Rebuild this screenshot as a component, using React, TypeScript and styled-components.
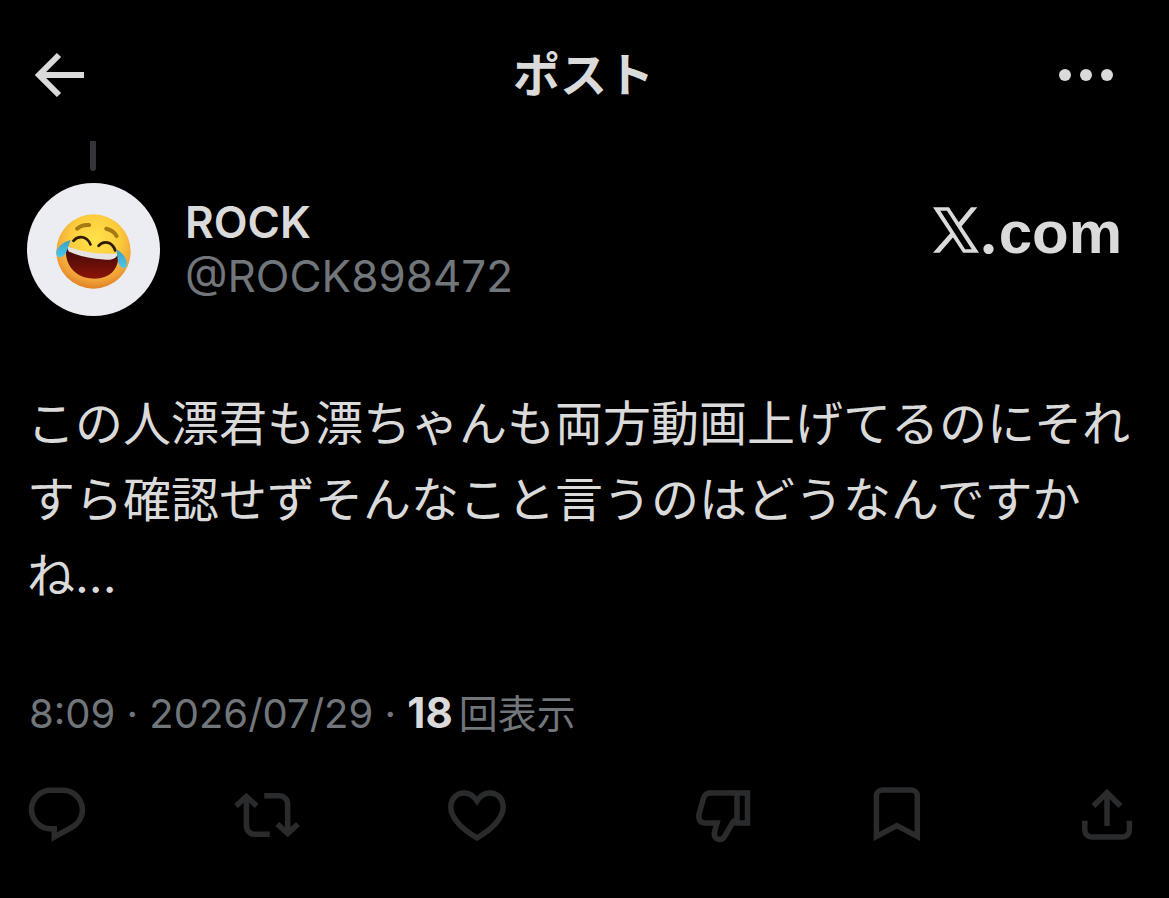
import React from "react";
import styled, { createGlobalStyle } from "styled-components";

const GlobalStyle = createGlobalStyle`
  * { box-sizing: border-box; }
  body {
    margin: 0;
    background: #000;
    color: #dadada;
    font-family: Inter, "Noto Sans CJK JP", sans-serif;
  }
`;

const Page = styled.main`
  padding: 0 29px 48px 27px;
`;

const Header = styled.header`
  display: grid;
  grid-template-columns: 87px 1fr 87px;
  align-items: center;
  height: 140px;
  padding-top: 10px;
`;

const Title = styled.h1`
  margin: 0;
  text-align: center;
  font-size: 47px;
  line-height: 72px;
  font-weight: 700;
`;

const IconButton = styled.button<{ $shift?: number }>`
  display: flex;
  width: 66px;
  padding: 0;
  margin-left: ${(p) => p.$shift ?? 0}px;
  border: 0;
  background: none;
  color: inherit;
  cursor: pointer;

  svg { display: block; flex: none; }
`;

const ThreadLine = styled.div`
  width: 6px;
  height: 30px;
  margin: 1px 0 12px 63px;
  border-radius: 0 0 3px 3px;
  background: #343538;
`;

const Author = styled.section`
  display: flex;
  align-items: flex-start;
  gap: 25px;
`;

const Avatar = styled.div`
  display: flex;
  align-items: center;
  justify-content: center;
  width: 133px;
  height: 133px;
  padding-top: 3px;
  border-radius: 50%;
  background: #ecedf2;
`;

const Names = styled.div`
  flex: 1;
  padding-top: 12px;
  font-size: 44px;
  line-height: 54px;
`;

const Name = styled.div`
  font-weight: 600;
`;

const Handle = styled.div`
  color: #71767b;
`;

const Brand = styled.div`
  display: flex;
  align-items: baseline;
  padding: 12px 18px 0 0;
  font-family: "Liberation Sans", Arial, sans-serif;
  font-size: 60px;
  line-height: 72px;
  font-weight: 700;
`;

const BrandDot = styled.span`
  font-family: Inter, sans-serif;
`;

const Body = styled.p`
  margin: 70px 0 0;
  font-size: 48px;
  line-height: 76px;
`;

const Meta = styled.p`
  margin: 69px 0 0;
  padding-left: 2px;
  color: #71767b;
  font-size: 40px;
  line-height: 60px;
`;

const Count = styled.strong`
  color: #dadada;
  font-size: 42px;
  font-weight: 700;
`;

const Views = styled.span`
  margin-left: 6px;
  font-size: 39px;
`;

const Actions = styled.footer`
  display: grid;
  grid-template-columns: repeat(6, 66px);
  justify-content: space-between;
  margin: 38px 0 0 -3px;
  color: #2a2b2d;
`;

const ActionIcon = ({ children }: { children: React.ReactNode }) => (
  <svg width="66" height="66" viewBox="0 0 66 66" fill="none" stroke="currentColor" strokeWidth="5.5">
    {children}
  </svg>
);

const XMark = () => (
  <svg width="46" height="46" viewBox="0 0 139 138" fill="currentColor" fillRule="evenodd">
    <path d="M0 0H48L139 138H91ZM22 11L97 127H117L42 11Z" />
    <path d="M115 0H134L83 62L74 50ZM0 138H20L64 87L56 74Z" />
  </svg>
);

const JoyFace = () => (
  <svg width="75" height="75" viewBox="0 0 224 224">
    <defs>
      <radialGradient id="skin" cx="0.52" cy="0.34" r="0.68">
        <stop offset="0" stopColor="#ffe34a" />
        <stop offset="0.5" stopColor="#fccb3c" />
        <stop offset="0.82" stopColor="#f0a038" />
        <stop offset="1" stopColor="#dd7a22" />
      </radialGradient>
      <linearGradient id="mouth" x1="0" y1="0" x2="0" y2="1">
        <stop offset="0" stopColor="#3d0808" />
        <stop offset="1" stopColor="#8a1408" />
      </linearGradient>
      <linearGradient id="tear" x1="0" y1="0" x2="0" y2="1">
        <stop offset="0" stopColor="#3b9fc0" />
        <stop offset="1" stopColor="#4cc8ee" />
      </linearGradient>
    </defs>
    <circle cx="112" cy="112" r="111" fill="url(#skin)" />
    <g fill="none" strokeLinecap="round">
      <path d="M63 44Q78 31 99 33" stroke="#a67a12" strokeWidth="12" />
      <path d="M150 44Q172 49 181 66" stroke="#a67a12" strokeWidth="12" />
      <path d="M52 80C66 64 92 64 103 91" stroke="#2e1a05" strokeWidth="8" />
      <path d="M127 95C142 78 168 82 177 109" stroke="#2e1a05" strokeWidth="8" />
    </g>
    <path d="M31 95C70 116 130 126 185 121C190 164 160 196 108 193C54 190 22 146 31 95Z" fill="url(#mouth)" />
    <path d="M31 95C70 112 130 122 185 118C180 136 164 138 142 136C100 132 68 126 38 112Z" fill="#e6e3e0" />
    <path d="M44 78C20 84 -2 104 1 120C5 134 24 130 30 116C35 104 38 92 44 78Z" fill="url(#tear)" />
    <path d="M181 106C202 116 218 144 209 158C200 168 188 154 185 140C183 128 182 116 181 106Z" fill="url(#tear)" />
  </svg>
);

export default function App() {
  return (
    <>
      <GlobalStyle />
      <Page>
        <Header>
          <IconButton aria-label="戻る">
            <svg width="66" height="66" viewBox="0 0 66 66" fill="none" stroke="currentColor" strokeWidth="6">
              <path d="M57 33H13M32 13L12 33L32 53" />
            </svg>
          </IconButton>
          <Title>ポスト</Title>
          <IconButton aria-label="その他">
            <svg width="66" height="66" viewBox="0 0 66 66" fill="currentColor">
              <circle cx="12" cy="33" r="6" />
              <circle cx="33" cy="33" r="6" />
              <circle cx="54" cy="33" r="6" />
            </svg>
          </IconButton>
        </Header>
        <ThreadLine />
        <Author>
          <Avatar>
            <JoyFace />
          </Avatar>
          <Names>
            <Name>ROCK</Name>
            <Handle>@ROCK898472</Handle>
          </Names>
          <Brand>
            <XMark />
            <span>
              <BrandDot>.</BrandDot>com
            </span>
          </Brand>
        </Author>
        <Body>この人漂君も漂ちゃんも両方動画上げてるのにそれすら確認せずそんなこと言うのはどうなんですかね...</Body>
        <Meta>
          8:09 · 2026/07/29 · <Count>18</Count>
          <Views>回表示</Views>
        </Meta>
        <Actions>
          <IconButton aria-label="返信">
            <svg width="66" height="66" viewBox="0 0 24 24" fill="currentColor">
              <path d="M1.751 10c0-4.42 3.584-8 8.005-8h4.366c4.49 0 8.129 3.64 8.129 8.13 0 2.96-1.607 5.68-4.196 7.11l-8.054 4.46v-3.69h-.067c-4.49.1-8.183-3.51-8.183-8.01zm8.005-6c-3.317 0-6.005 2.69-6.005 6 0 3.37 2.77 6.08 6.138 6.01l.351-.01h1.761v2.3l5.087-2.81c1.951-1.08 3.163-3.13 3.163-5.36 0-3.39-2.744-6.13-6.129-6.13H9.756z" />
            </svg>
          </IconButton>
          <IconButton aria-label="リポスト">
            <svg width="66" height="66" viewBox="0 0 24 24" fill="currentColor">
              <path d="M4.5 3.88l4.432 4.14-1.364 1.46L5.5 7.55V16c0 1.1.896 2 2 2H13v2H7.5c-2.209 0-4-1.79-4-4V7.55L1.432 9.48.068 8.02 4.5 3.88zM16.5 6H11V4h5.5c2.209 0 4 1.79 4 4v8.45l2.068-1.93 1.364 1.46-4.432 4.14-4.432-4.14 1.364-1.46 2.068 1.93V8c0-1.1-.896-2-2-2z" />
            </svg>
          </IconButton>
          <IconButton aria-label="いいね">
            <ActionIcon>
              <path d="M33 19C29.5 13.5 25 11 20 11C12.5 11 6.8 17 6.8 25C6.8 37 20 48.5 33 55.8C46 48.5 59.2 37 59.2 25C59.2 17 53.5 11 46 11C41 11 36.5 13.5 33 19Z" />
            </ActionIcon>
          </IconButton>
          <IconButton aria-label="低評価" $shift={36}>
            <ActionIcon>
              <path d="M47 11H20C16 11 14.5 13 13.5 16L9.3 31C7.8 36.5 10 41 15 41H27L24.5 50C23.5 54.5 26.5 57.5 29.5 57.5C32 57.5 33.5 56.5 34.5 54.5L43 40Q44 38.5 47 38.5" />
              <path d="M47 11H57.5V41H47Z" />
            </ActionIcon>
          </IconButton>
          <IconButton aria-label="ブックマーク">
            <ActionIcon>
              <path d="M12.4 54.5V14a6 6 0 0 1 6-6H47.3a6 6 0 0 1 6 6V54.5L32.9 43.5Z" />
            </ActionIcon>
          </IconButton>
          <IconButton aria-label="共有">
            <ActionIcon>
              <path d="M33 44V10M19.5 24L33 10.6L46.5 24" />
              <path d="M10.8 38.7V48a7 7 0 0 0 7 7H48.4a7 7 0 0 0 7-7V38.7" />
            </ActionIcon>
          </IconButton>
        </Actions>
      </Page>
    </>
  );
}
